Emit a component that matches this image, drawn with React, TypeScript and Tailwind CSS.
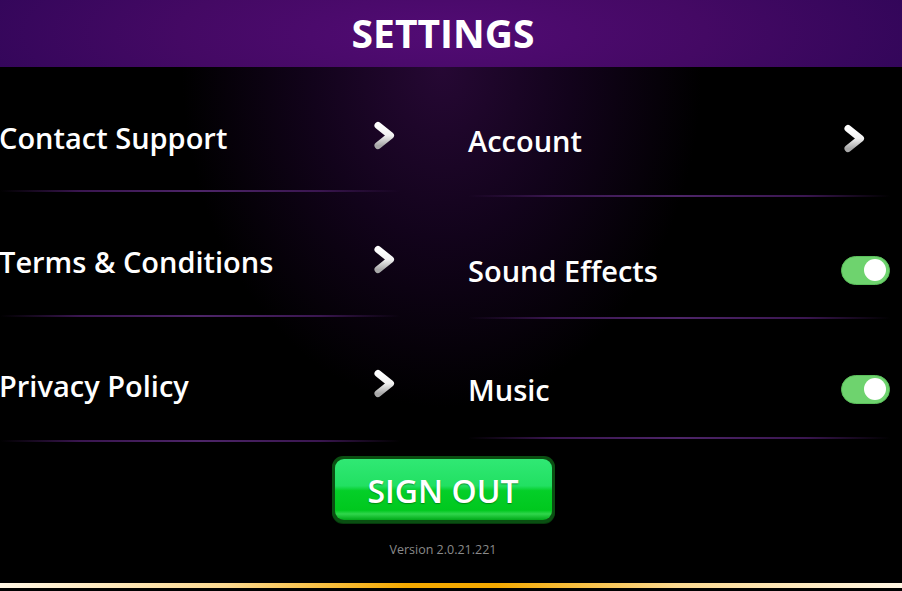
import React from "react";

type Row = {
    label: string;
    kind: "link" | "toggle";
    top: string;
    bottom: string;
};

const leftRows: Row[] = [
    {label: "Contact Support", kind: "link", top: "mt-[50px]", bottom: "mb-[33px]"},
    {label: "Terms & Conditions", kind: "link", top: "mt-[49px]", bottom: "mb-[34px]"},
    {label: "Privacy Policy", kind: "link", top: "mt-[48px]", bottom: "mb-[35px]"},
];

const rightRows: Row[] = [
    {label: "Account", kind: "link", top: "mt-[53px]", bottom: "mb-[35px]"},
    {label: "Sound Effects", kind: "toggle", top: "mt-[53px]", bottom: "mb-[27px]"},
    {label: "Music", kind: "toggle", top: "mt-[50px]", bottom: "mb-[28px]"},
];

export default function App() {
    return (
        <div
            className="w-[902px] h-[591px] bg-black flex flex-col overflow-hidden text-white"
            style={{fontFamily: '"Open Sans", "Noto Sans", sans-serif'}}
        >
            {/* ================= HEADER ================= */}
            <header className="h-[67px] shrink-0 flex items-center justify-center pr-[16px] bg-[radial-gradient(ellipse_480px_120px_at_49%_50%,#520b74_0%,#440964_55%,#33065a_100%)]">
                <h1 className="text-[39px] font-bold leading-none mt-[-3px]">
                    SETTINGS
                </h1>
            </header>

            {/* ================= BODY ================= */}
            <main className="flex-1 flex flex-col bg-[radial-gradient(ellipse_260px_340px_at_49%_0%,#260834_0%,#12031b_50%,#000_100%)]">
                <div className="flex">
                    <div className="w-[400px] flex flex-col">
                        {leftRows.map((row) => (
                            <SettingRow key={row.label} row={row} textShift="ml-[-1px]" iconGap="mr-[4px]" />
                        ))}
                    </div>
                    <div className="w-[422px] ml-[68px] flex flex-col">
                        {rightRows.map((row) => (
                            <SettingRow key={row.label} row={row} textShift="ml-0" iconGap="mr-[24px]" />
                        ))}
                    </div>
                </div>

                {/* ================= SIGN OUT ================= */}
                <div className="flex flex-col items-center pr-[16px] mt-[14px]">
                    <button className="w-[223px] h-[67px] rounded-[11px] bg-[#0a4f12] p-[3px] shadow-[0_1px_0_#063a0c]">
                        <span className="w-full h-full rounded-[9px] flex items-center justify-center bg-[linear-gradient(to_bottom,#30e874_0%,#22e062_44%,#04cf28_52%,#00c81e_84%,#30d64c_90%,#00a818_100%)]">
                            <span className="text-[32px] font-semibold leading-none mt-[3px] [text-shadow:0_1px_1px_rgba(0,80,0,0.5)]">
                                SIGN OUT
                            </span>
                        </span>
                    </button>
                    <span className="mt-[21px] text-[12.5px] leading-none text-[#8a8a8a]">
                        Version 2.0.21.221
                    </span>
                </div>

                <div className="flex-1" />
                <div className="h-[5px] mb-[3px] bg-[linear-gradient(to_right,#fff6e4_0%,#fbd990_25%,#f4a900_45%,#f4a900_55%,#fbd990_75%,#fff6e4_100%)]" />
            </main>
        </div>
    );
}

/* =========================================================
   ROW
   ========================================================= */

function SettingRow({row, textShift, iconGap}: {row: Row; textShift: string; iconGap: string}) {
    return (
        <div className="flex flex-col">
            <div className={`${row.top} ${row.bottom} h-[40px] flex items-center justify-between`}>
                <span className={`${textShift} text-[29px] font-semibold leading-none whitespace-nowrap`}>
                    {row.label}
                </span>
                {row.kind === "link" ? (
                    <span className={iconGap}>
                        <Chevron />
                    </span>
                ) : (
                    <Toggle />
                )}
            </div>
            <div className="h-[2px] bg-[linear-gradient(to_right,transparent_0%,#3a1650_20%,#4d2568_50%,#3a1650_80%,transparent_100%)]" />
        </div>
    );
}

function Chevron() {
    return (
        <svg width="23" height="29" viewBox="0 0 23 29" className="block mt-[-3px]">
            <defs>
                <linearGradient id="chev" x1="0" y1="0" x2="0" y2="1">
                    <stop offset="0%" stopColor="#ffffff" />
                    <stop offset="50%" stopColor="#f2f2f2" />
                    <stop offset="100%" stopColor="#a8a8a8" />
                </linearGradient>
            </defs>
            <polyline
                points="5,4.5 17.5,14.5 5,24.5"
                fill="none"
                stroke="url(#chev)"
                strokeWidth="7"
                strokeLinecap="round"
                strokeLinejoin="round"
            />
        </svg>
    );
}

function Toggle() {
    return (
        <span className="w-[49px] h-[29px] rounded-full bg-[#6ed36e] border border-[#5bbf5b] flex items-center justify-end pr-[3px]">
            <span className="w-[22px] h-[22px] rounded-full bg-white" />
        </span>
    );
}
